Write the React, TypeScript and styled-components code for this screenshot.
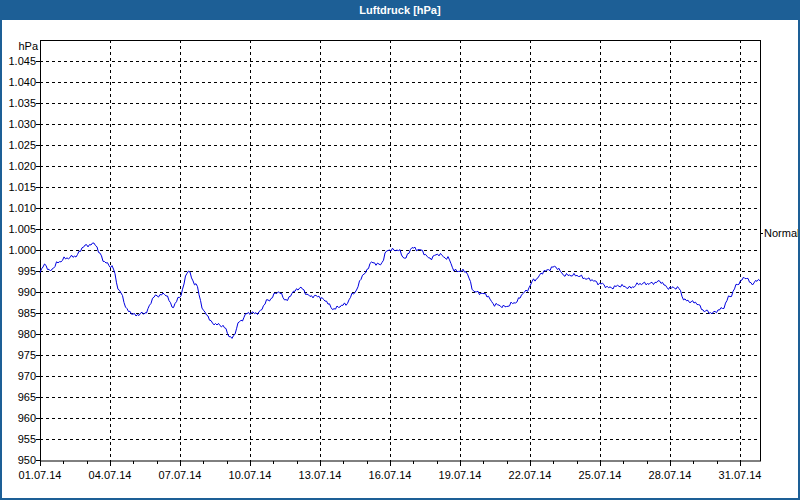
import React from "react";
import styled, { createGlobalStyle } from "styled-components";

const G = createGlobalStyle`body{margin:0;font-family:"Liberation Sans",sans-serif;}`;
const Frame = styled.div`width:800px;height:500px;box-sizing:border-box;border:2px solid #1d5f96;border-top:none;display:flex;flex-direction:column;background:#fff;`;
const Title = styled.div`height:20px;margin:0 -2px;background:#1d5f96;color:#fff;font:bold 11px "Liberation Sans",sans-serif;display:flex;align-items:center;justify-content:center;`;
const Chart = styled.svg`display:block;flex:1;`;

const kp: [number, number][] = [[40,995],[45,996.5],[50,995],[58,997],[65,998],[75,998.5],[85,1001],[95,1001.5],[100,999],[105,997],[112,996],[120,990],[128,985.5],[135,984.5],[145,985],[155,989],[165,989.5],[173,986.5],[180,989],[188,995],[195,992],[205,985],[213,982.5],[222,982],[232,979],[240,983],[248,985],[258,985],[268,988],[278,990],[287,988],[293,990],[300,991],[310,989],[318,989],[325,988],[333,986],[345,987],[355,990],[363,994],[372,997],[380,996.5],[388,1000],[398,1000],[405,998],[412,1000.5],[420,1000],[430,998],[438,999],[448,998],[455,995],[465,995],[475,990],[485,989.5],[495,987],[505,986.5],[515,987.5],[525,990],[535,993],[545,995],[555,996],[565,994],[575,994],[590,993],[600,992],[610,991],[620,991.5],[630,991],[640,992],[650,992],[660,992.5],[668,991],[678,991],[685,988],[695,987.5],[705,985.5],[712,985],[722,986],[730,989],[738,992],[745,993.5],[752,992],[760,993]];
const Y = (v: number) => 40 + (1050 - v) * 4.2;
const pts: string[] = [];
for (let x = 40; x <= 760; x += 1.5) {
  let i = 0;
  while (i < kp.length - 2 && kp[i + 1][0] < x) i++;
  const [x0, v0] = kp[i], [x1, v1] = kp[i + 1];
  const t = Math.min(1, Math.max(0, (x - x0) / (x1 - x0)));
  const s = (1 - Math.cos(t * Math.PI)) / 2;
  const v = v0 + (v1 - v0) * s + Math.sin(x * 1.7) * 0.25 + Math.sin(x * 0.9) * 0.2;
  pts.push(`${x.toFixed(1)},${Y(v).toFixed(1)}`);
}
const ylabels = Array.from({ length: 20 }, (_, k) => 950 + k * 5);
const days = Array.from({ length: 31 }, (_, d) => d);
const fmt = (v: number) => (v >= 1000 ? "1." + String(v - 1000).padStart(3, "0") : String(v));

export default function App() {
  return (
    <Frame>
      <G />
      <Title>Luftdruck [hPa]</Title>
      <Chart viewBox="2 20 796 478">
        <g fontFamily='"Liberation Sans",sans-serif' fontSize="11" fill="#000">
          {ylabels.slice(1).map(v => (
            <line key={v} x1={40} x2={760} y1={Y(v) + 0.5} y2={Y(v) + 0.5} stroke="#000" strokeDasharray="3 3" />
          ))}
          {days.filter(d => d % 3 === 0 && d > 0).map(d => {
            const x = Math.round(40 + d * 70 / 3) + 0.5;
            return <line key={d} x1={x} x2={x} y1={40} y2={461} stroke="#000" strokeDasharray="3 3" />;
          })}
          {days.map(d => {
            const x = Math.round(40 + d * 70 / 3) + 0.5;
            return <line key={"t" + d} x1={x} x2={x} y1={461} y2={d % 3 === 0 ? 466 : 464} stroke="#000" />;
          })}
          {ylabels.map(v => (
            <React.Fragment key={"l" + v}>
              <line x1={36} x2={40} y1={Y(v) + 0.5} y2={Y(v) + 0.5} stroke="#000" />
              <text x={36} y={Y(v) + 4} textAnchor="end">{fmt(v)}</text>
            </React.Fragment>
          ))}
          <text x={38} y={50} textAnchor="end">hPa</text>
          {days.filter(d => d % 3 === 0).map(d => (
            <text key={"x" + d} x={40 + d * 70 / 3} y={479} textAnchor="middle">{String(d + 1).padStart(2, "0")}.07.14</text>
          ))}
          <rect x={40.5} y={40.5} width={720} height={420.5} fill="none" stroke="#000" />
          <line x1={760} x2={763} y1={233.5} y2={233.5} stroke="#000" />
          <text x={764} y={237}>Normal</text>
          <polyline points={pts.join(" ")} fill="none" stroke="#0000e0" strokeWidth="1" />
        </g>
      </Chart>
    </Frame>
  );
}
